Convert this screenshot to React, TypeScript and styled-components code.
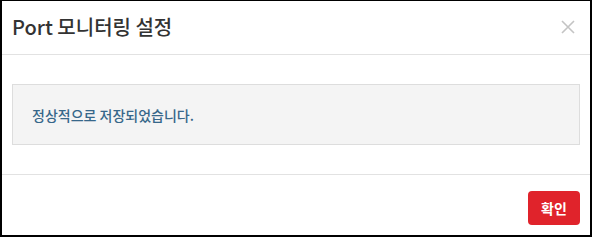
import React from 'react';
import styled, { createGlobalStyle } from 'styled-components';

const GlobalStyle = createGlobalStyle`
  html, body {
    margin: 0;
    padding: 0;
    background: #ffffff;
  }
  body {
    font-family: "Noto Sans CJK KR", "Noto Sans", sans-serif;
  }
`;

const Modal = styled.div`
  width: 592px;
  height: 237px;
  box-sizing: border-box;
  border: 2px solid #000;
  border-top-width: 1px;
  background: #fff;
  display: flex;
  flex-direction: column;
`;

const Header = styled.div`
  height: 54px;
  box-sizing: border-box;
  display: flex;
  align-items: center;
  justify-content: space-between;
  padding: 0 14px 2px 10px;
  border-bottom: 1px solid #e2e2e2;
`;

const Title = styled.h4`
  margin: 0;
  font-size: 20px;
  font-weight: 500;
  color: #333;
`;

const CloseButton = styled.button`
  width: 16px;
  height: 16px;
  padding: 0;
  border: 0;
  background: none;
  display: flex;
  align-items: center;
  justify-content: center;
  cursor: pointer;
`;

const Body = styled.div`
  padding: 29px 10px 29px;
  border-bottom: 1px solid #e2e2e2;
`;

const Alert = styled.div`
  height: 61px;
  box-sizing: border-box;
  display: flex;
  align-items: center;
  padding: 0 19px 0;
  background: #f4f4f4;
  border: 1px solid #dddddd;
  color: #37678a;
  font-size: 14px;
  font-weight: 500;
`;

const Footer = styled.div`
  flex: 1;
  display: flex;
  justify-content: flex-end;
  align-items: flex-start;
  padding: 16px 10px 0;
`;

const ConfirmButton = styled.button`
  width: 52px;
  height: 34px;
  border: 0;
  border-radius: 4px;
  background: #e0232b;
  color: #fff;
  font-family: "Noto Sans CJK KR", sans-serif;
  font-size: 14px;
  font-weight: 700;
  cursor: pointer;
`;

export default function App() {
  return (
    <>
      <GlobalStyle />
      <Modal>
        <Header>
          <Title>Port 모니터링 설정</Title>
          <CloseButton aria-label="닫기">
            <svg width="14" height="14" viewBox="0 0 14 14">
              <path d="M1 1 L13 13 M13 1 L1 13" stroke="#c4c4c4" strokeWidth="1.6" />
            </svg>
          </CloseButton>
        </Header>
        <Body>
          <Alert>정상적으로 저장되었습니다.</Alert>
        </Body>
        <Footer>
          <ConfirmButton>확인</ConfirmButton>
        </Footer>
      </Modal>
    </>
  );
}
